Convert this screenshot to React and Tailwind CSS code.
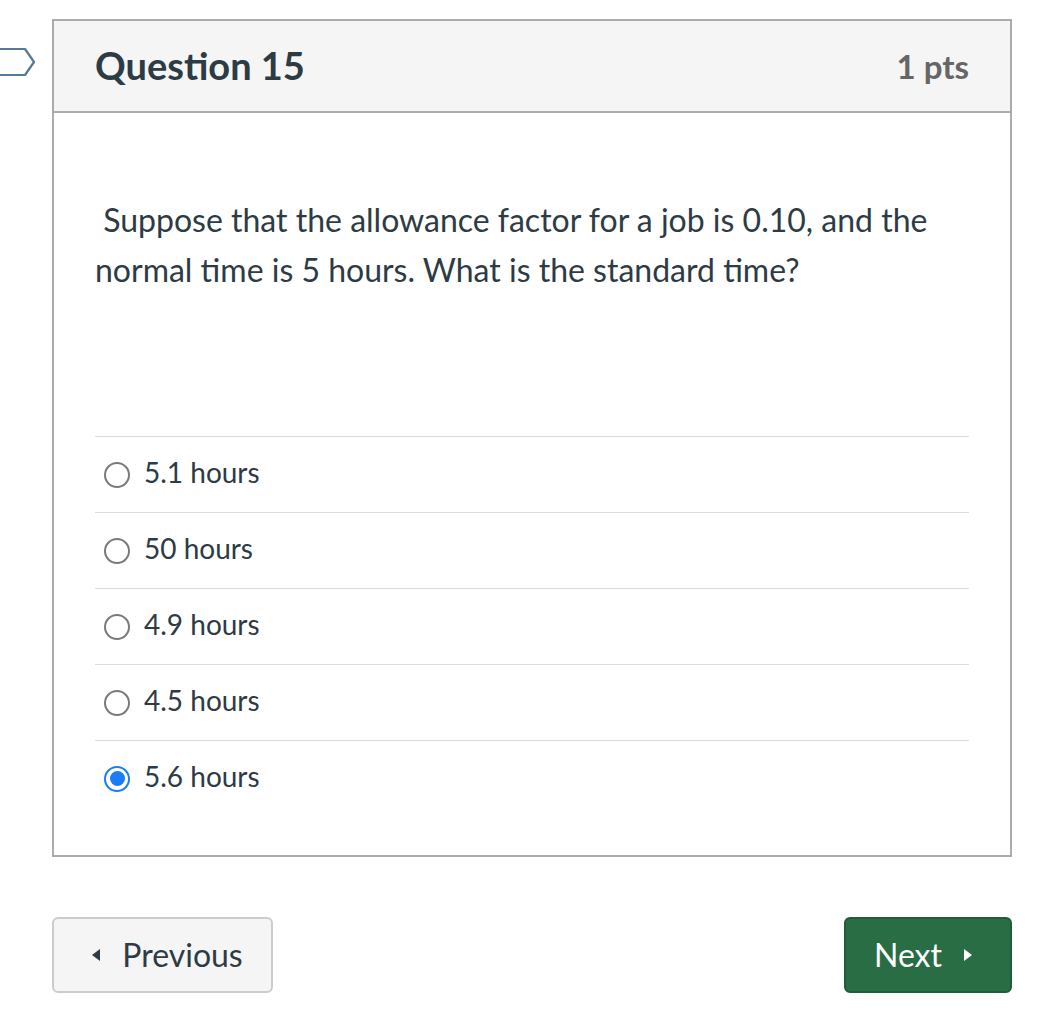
import React from "react";

const answers = ["5.1 hours", "50 hours", "4.9 hours", "4.5 hours", "5.6 hours"];

function Radio({ checked }) {
  if (checked) {
    return (
      <span className="flex h-[26px] w-[26px] shrink-0 items-center justify-center rounded-full border-[2.5px] border-[#1b7cf5] bg-white">
        <span className="h-[15px] w-[15px] rounded-full bg-[#1b7cf5]" />
      </span>
    );
  }
  return <span className="h-[26px] w-[26px] shrink-0 rounded-full border-2 border-[#7a7a7a] bg-white" />;
}

export default function App() {
  return (
    <div className="min-h-[1020px] w-[1038px] bg-white text-[#2d3b45]" style={{ fontFamily: "Lato, 'Open Sans', sans-serif" }}>
      <div className="flex pt-[19px]">
        <div className="w-[52px] shrink-0 pt-[28px]">
          <svg width="40" height="32" viewBox="0 0 40 32" className="block">
            <path d="M-4 2 H25 L34 15 L25 28 H-4" fill="none" stroke="#56789a" strokeWidth="2.2" strokeLinejoin="round" />
          </svg>
        </div>
        <div className="w-[960px] border-2 border-[#ababab]">
          <div className="flex h-[92px] items-center justify-between border-b-2 border-[#ababab] bg-[#f5f5f5] px-[41px]">
            <span className="pb-[2px] text-[38px] font-bold leading-none">Question 15</span>
            <span className="text-[33px] font-bold leading-none text-[#666]">1 pts</span>
          </div>
          <div className="px-[41px] pb-[39px] pt-[82px]">
            <p className="text-[32px] leading-[50px]">&nbsp;Suppose that the allowance factor for a job is 0.10, and the normal time is 5 hours. What is the standard time?</p>
            <div className="mt-[141px]">
              {answers.map((a, i) => (
                <div key={a} className="flex h-[76px] items-center gap-[14px] border-t border-[#dcdcdc] pl-[9px]">
                  <Radio checked={i === 4} />
                  <span className="pb-[5px] text-[28px] leading-none">{a}</span>
                </div>
              ))}
            </div>
          </div>
        </div>
      </div>
      <div className="ml-[52px] mt-[60px] flex w-[960px] justify-between">
        <button className="flex h-[76px] w-[221px] items-center justify-center gap-[22px] rounded-[6px] border-2 border-[#c7cdd1] bg-[#f5f5f5] pl-[10px] text-[32px] text-[#2d3b45]">
          <svg width="8" height="12" viewBox="0 0 8 12"><path d="M8 0 L0 6 L8 12 Z" fill="#2d3b45" /></svg>
          <span>Previous</span>
        </button>
        <button className="flex h-[76px] w-[168px] items-center justify-center gap-[22px] rounded-[6px] border-2 border-[#1f5c37] bg-[#286d43] pr-[10px] text-[32px] text-white">
          <span>Next</span>
          <svg width="8" height="12" viewBox="0 0 8 12"><path d="M0 0 L8 6 L0 12 Z" fill="#ffffff" /></svg>
        </button>
      </div>
    </div>
  );
}
